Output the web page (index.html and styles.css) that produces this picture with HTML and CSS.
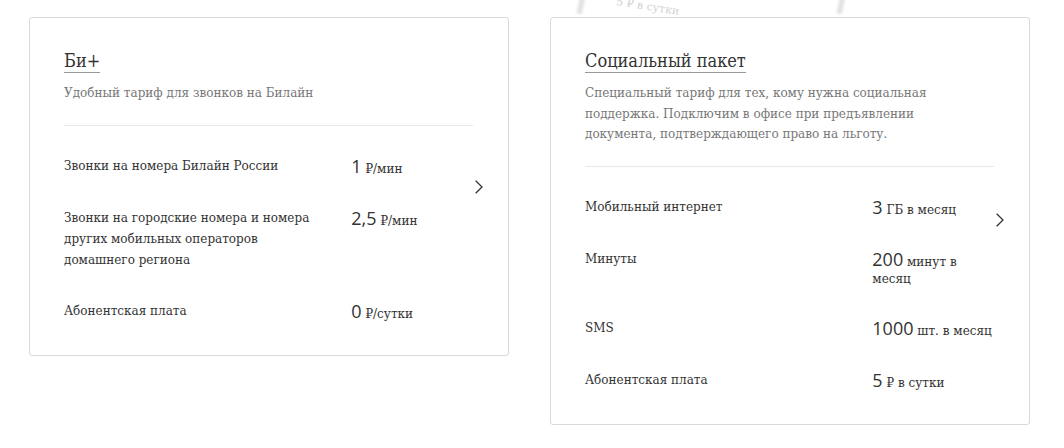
FILE: index.html
```html
<!DOCTYPE html>
<html>
<head>
  <meta charset="utf-8">
  <meta name="viewport" content="width=device-width, initial-scale=1">
  <title>Тарифы</title>
  <link rel="stylesheet" href="styles.css">
</head>
<body>
  <div class="ghost" aria-hidden="true">
    <span class="ghost-bar left"></span>
    <span class="ghost-text">5 ₽ в сутки</span>
    <span class="ghost-bar right"></span>
  </div>

  <div class="cards">
    <div class="card">
      <div class="card-head">
        <h2 class="card-title"><span>Би+</span></h2>
        <p class="card-desc">Удобный тариф для звонков на Билайн</p>
      </div>
      <div class="params">
        <div class="param">
          <div class="param-name">Звонки на номера Билайн России</div>
          <div class="param-value"><b>1</b> ₽/мин</div>
        </div>
        <div class="param">
          <div class="param-name">Звонки на городские номера и номера других мобильных операторов домашнего региона</div>
          <div class="param-value"><b>2,5</b> ₽/мин</div>
        </div>
        <div class="param">
          <div class="param-name">Абонентская плата</div>
          <div class="param-value"><b>0</b> ₽/сутки</div>
        </div>
        <svg class="chevron one" width="8" height="14" viewBox="0 0 8 14"><path d="M0.7 0.7 L7 7 L0.7 13.3" fill="none" stroke="#333" stroke-width="1.3"/></svg>
      </div>
    </div>

    <div class="card">
      <div class="card-head">
        <h2 class="card-title"><span>Социальный пакет</span></h2>
        <p class="card-desc">Специальный тариф для тех, кому нужна социальная поддержка. Подключим в офисе при предъявлении документа, подтверждающего право на льготу.</p>
      </div>
      <div class="params">
        <div class="param">
          <div class="param-name">Мобильный интернет</div>
          <div class="param-value"><b>3</b> ГБ в месяц</div>
        </div>
        <div class="param">
          <div class="param-name">Минуты</div>
          <div class="param-value"><b>200</b> минут в месяц</div>
        </div>
        <div class="param">
          <div class="param-name">SMS</div>
          <div class="param-value"><b>1000</b> шт. в месяц</div>
        </div>
        <div class="param">
          <div class="param-name">Абонентская плата</div>
          <div class="param-value"><b>5</b> ₽ в сутки</div>
        </div>
        <svg class="chevron two" width="8" height="14" viewBox="0 0 8 14"><path d="M0.7 0.7 L7 7 L0.7 13.3" fill="none" stroke="#333" stroke-width="1.3"/></svg>
      </div>
    </div>
  </div>
</body>
</html>
```

FILE: styles.css
```css
body {
  margin: 0;
  background: #fff;
  color: #333;
  font-family: "DejaVu Serif", "Liberation Serif", serif;
}
.ghost {
  position: absolute;
  top: -14px;
  left: 570px;
  width: 280px;
  height: 30px;
  pointer-events: none;
}
.ghost-bar {
  position: absolute;
  top: 0;
  width: 8px;
  height: 28px;
  background: linear-gradient(90deg, #fff, #d8d8d8, #fff);
  filter: blur(1px);
  transform: rotate(12deg);
}
.ghost-bar.left {
  left: 8px;
}
.ghost-bar.right {
  left: 268px;
}
.ghost-text {
  position: absolute;
  top: 14px;
  left: 46px;
  font-size: 11px;
  line-height: 13px;
  color: #d2d2d2;
  transform: rotate(9deg);
  white-space: nowrap;
}
.cards {
  display: flex;
  align-items: flex-start;
  gap: 41px;
  padding: 17px 0 0 29px;
}
.card {
  box-sizing: border-box;
  width: 480px;
  padding: 30px 35px 32px 34px;
  border: 1px solid #d9d9d9;
  border-radius: 3px;
  background: #fff;
}
.card-head {
  padding-bottom: 21px;
  border-bottom: 1px solid #e8e8e8;
}
.card-title {
  margin: 0;
  font-family: "DejaVu Serif Condensed", "DejaVu Serif", serif;
  font-stretch: condensed;
  font-size: 18px;
  font-weight: normal;
  line-height: 26px;
  color: #333;
}
.card-title span {
  border-bottom: 1px solid #999;
  padding-bottom: 1px;
}
.card-desc {
  max-width: 352px;
  margin: 9px 0 0;
  font-size: 12px;
  line-height: 20.5px;
  color: #777;
}
.params {
  position: relative;
  display: flex;
  flex-direction: column;
  gap: 30px;
  padding-top: 30px;
}
.param {
  display: flex;
  font-size: 12px;
  line-height: 21px;
}
.param-name {
  width: 250px;
  margin-right: 38px;
}
.param-value {
  width: 122px;
  padding-top: 2px;
  line-height: 17px;
}
.param-value b {
  font-family: "Open Sans", "DejaVu Sans", sans-serif;
  font-weight: normal;
  font-size: 18px;
  line-height: 16px;
}
.chevron {
  position: absolute;
  right: -10px;
}
.chevron.one {
  top: 54px;
}
.chevron.two {
  top: 46px;
}
```
